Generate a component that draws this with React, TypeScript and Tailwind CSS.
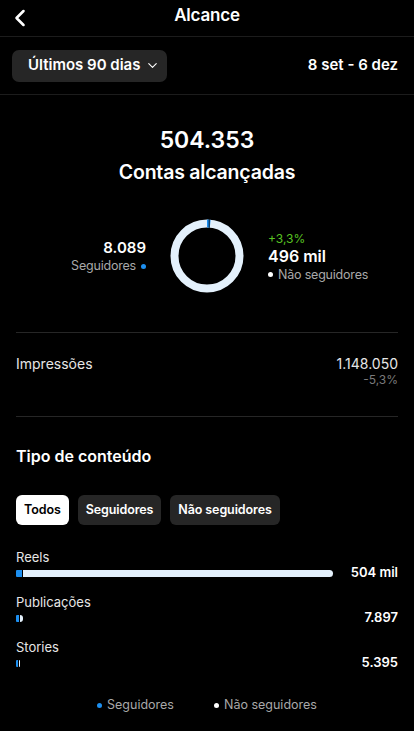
import { ChevronLeft, ChevronDown } from 'lucide-react';

const bars = [
  { label: 'Reels', value: '504 mil', width: 317, blue: 6 },
  { label: 'Publicações', value: '7.897', width: 7, blue: 3 },
  { label: 'Stories', value: '5.395', width: 4, blue: 2 },
];

function Donut() {
  const r = 32.5;
  const c = 2 * Math.PI * r;
  const blue = c * 0.016;
  return (
    <svg width="74" height="74" viewBox="0 0 74 74">
      <circle cx="37" cy="37" r={r} fill="none" stroke="#e4f1fc" strokeWidth="8" />
      <circle
        cx="37"
        cy="37"
        r={r}
        fill="none"
        stroke="#1d8ff0"
        strokeWidth="8"
        strokeDasharray={`${blue} ${c - blue}`}
        transform="rotate(-90 37 37)"
      />
      <line x1="39.2" y1="0" x2="39.2" y2="9" stroke="#000" strokeWidth="0.8" />
    </svg>
  );
}

export default function App() {
  return (
    <div className="w-[414px] h-[731px] bg-black text-white overflow-hidden font-['Inter','Liberation_Sans',sans-serif]">
      <div className="relative h-[37px] flex items-center justify-center border-b border-[#1c1c1c]">
        <ChevronLeft className="absolute left-[6px] top-[4px] w-[28px] h-[28px]" strokeWidth={2.2} />
        <span className="text-[17px] font-semibold tracking-[-0.2px] mt-[-4px]">Alcance</span>
      </div>

      <div className="h-[58px] flex items-center justify-between px-3 border-b border-[#1c1c1c]">
        <button className="h-[32px] w-[155px] rounded-[7px] bg-[#262626] flex items-center pl-4 gap-[5px] text-[15px] font-semibold">
          Últimos 90 dias
          <ChevronDown className="w-[15px] h-[15px]" strokeWidth={1.8} />
        </button>
        <span className="text-[15px] font-semibold mr-[4px]">8 set - 6 dez</span>
      </div>

      <div className="flex flex-col items-center pt-[31px]">
        <div className="text-[23px] font-semibold leading-[28px]">504.353</div>
        <div className="text-[19.5px] font-semibold leading-[24px] mt-[6px] tracking-[-0.2px]">Contas alcançadas</div>
      </div>

      <div className="flex items-center justify-center mt-[35px] h-[74px]">
        <div className="w-[150px] flex flex-col items-end pr-[4px] pt-[2px]">
          <span className="text-[15px] font-semibold leading-[18px]">8.089</span>
          <span className="text-[12.5px] text-[#a8a8a8] leading-[18px] flex items-center gap-[5px] tracking-[-0.2px]">
            Seguidores <span className="w-[5px] h-[5px] rounded-full bg-[#1d8ff0]" />
          </span>
        </div>
        <div className="mx-[20px]">
          <Donut />
        </div>
        <div className="w-[150px] flex flex-col items-start pl-[4px] mt-[1px]">
          <span className="text-[12px] text-[#58c322] leading-[16px]">+3,3%</span>
          <span className="text-[16px] font-semibold leading-[19px]">496 mil</span>
          <span className="text-[12.5px] text-[#a8a8a8] leading-[17px] flex items-center gap-[5px] tracking-[-0.2px]">
            <span className="w-[5px] h-[5px] rounded-full bg-white" /> Não seguidores
          </span>
        </div>
      </div>

      <div className="mx-4 mt-[39px] border-t border-[#262626]" />

      <div className="mx-4 flex justify-between pt-[21px] h-[83px]">
        <span className="text-[14px] text-[#e6e6e6] leading-[20px]">Impressões</span>
        <div className="flex flex-col items-end">
          <span className="text-[14px] text-[#e6e6e6] leading-[20px]">1.148.050</span>
          <span className="text-[12px] text-[#7a7a7a] leading-[12px]">-5,3%</span>
        </div>
      </div>

      <div className="mx-4 border-t border-[#262626]" />

      <div className="mx-4 pt-[28px] text-[16px] font-semibold leading-[22px]">Tipo de conteúdo</div>

      <div className="mx-4 mt-[28px] flex gap-[9px]">
        <button className="h-[30px] px-[8px] rounded-[6px] bg-white text-black text-[12.5px] font-semibold tracking-[-0.1px]">Todos</button>
        <button className="h-[30px] px-[8px] rounded-[6px] bg-[#262626] text-[12.5px] font-semibold tracking-[-0.1px]">Seguidores</button>
        <button className="h-[30px] px-[8px] rounded-[6px] bg-[#262626] text-[12.5px] font-semibold tracking-[-0.1px]">Não seguidores</button>
      </div>

      <div className="mx-4 mt-[23px] flex flex-col gap-[13px]">
        {bars.map((b) => (
          <div key={b.label} className="flex flex-col">
            <span className="text-[13px] text-[#e6e6e6] leading-[18px]">{b.label}</span>
            <div className="flex items-center justify-between h-[14px]">
              <div className="flex items-center gap-[1px] h-[7px]">
                <div className="h-full bg-[#1d8ff0] rounded-l-[1px]" style={{ width: b.blue }} />
                <div className="h-full bg-[#e4f1fc] rounded-r-full" style={{ width: b.width - b.blue - 1 }} />
              </div>
              <span className="text-[13px] font-semibold">{b.value}</span>
            </div>
          </div>
        ))}
      </div>

      <div className="flex justify-center gap-[40px] mt-[26px] text-[12.5px] text-[#a8a8a8]">
        <span className="flex items-center gap-[5px]">
          <span className="w-[5px] h-[5px] rounded-full bg-[#1d8ff0]" /> Seguidores
        </span>
        <span className="flex items-center gap-[5px]">
          <span className="w-[5px] h-[5px] rounded-full bg-white" /> Não seguidores
        </span>
      </div>
    </div>
  );
}
